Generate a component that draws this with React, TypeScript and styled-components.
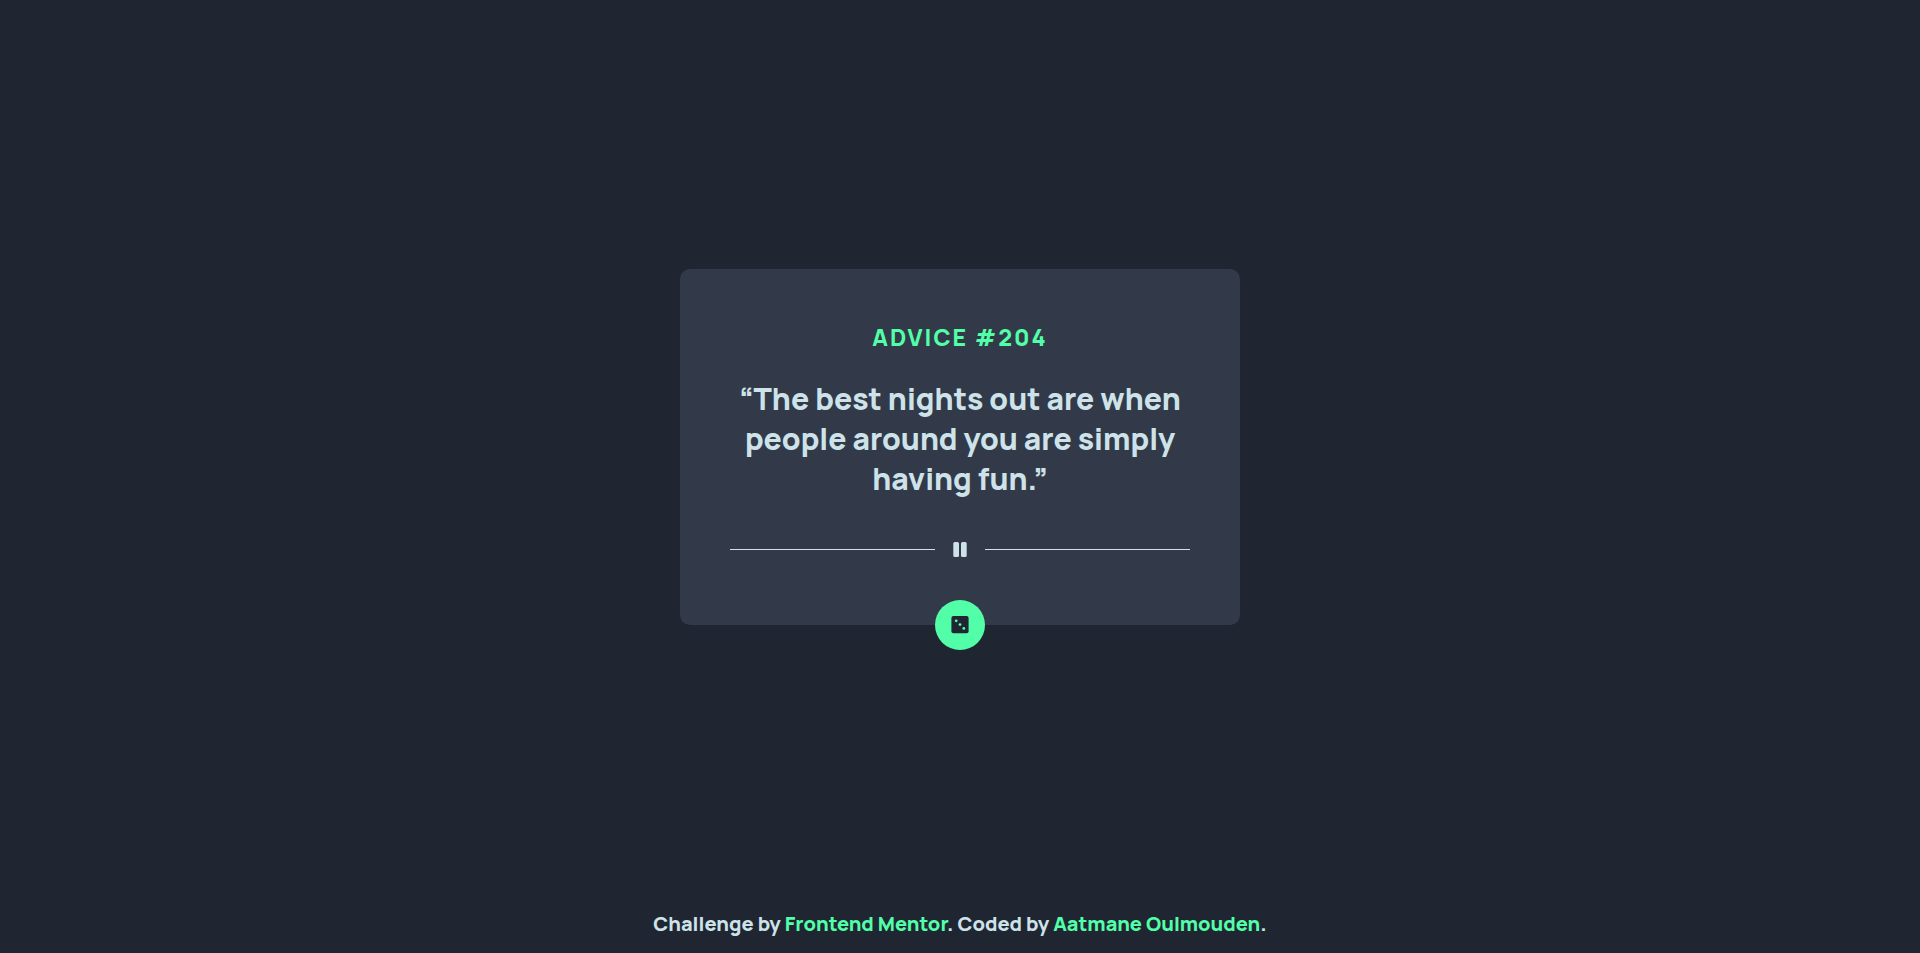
import React from "react";
import styled, { createGlobalStyle } from "styled-components";

const GlobalStyle = createGlobalStyle`
  *, *::before, *::after { box-sizing: border-box; }
  body {
    margin: 0;
    background: #1f2632;
    color: #cee3e9;
    font-family: Manrope, Inter, "Open Sans", sans-serif;
    font-weight: 800;
  }
`;

const Page = styled.div`
  display: flex;
  flex-direction: column;
  align-items: center;
  min-height: 100vh;
`;

const Main = styled.main`
  flex: 1;
  display: flex;
  align-items: center;
  justify-content: center;
  width: 100%;
  padding: 16px;
`;

const Card = styled.section`
  display: flex;
  flex-direction: column;
  align-items: center;
  width: 100%;
  max-width: 560px;
  padding: 50px 50px 0;
  border-radius: 10px;
  background: #323a49;
  text-align: center;
`;

const Title = styled.h1`
  margin: 0 0 24px;
  color: #52ffa8;
  font-size: 23px;
  font-weight: 800;
  line-height: 36px;
  letter-spacing: 2px;
`;

const Quote = styled.p`
  margin: 0;
  font-size: 30px;
  line-height: 40px;
`;

const Divider = styled.div`
  display: flex;
  align-items: center;
  width: 100%;
  height: 21px;
  margin: 40px 0;
  gap: 18px;
`;

const Line = styled.span`
  flex: 1;
  height: 1px;
  background: #cee3e9;
`;

const DiceButton = styled.button`
  display: grid;
  place-items: center;
  width: 50px;
  height: 50px;
  margin-bottom: -25px;
  padding: 0;
  border: 0;
  border-radius: 50%;
  background: #52ffa8;
  color: #1f2632;
  cursor: pointer;
`;

const Footer = styled.footer`
  padding: 16px;
  font-size: 20px;
  line-height: 27px;
  text-align: center;
`;

const Link = styled.a`
  color: #52ffa8;
  text-decoration: none;
`;

export default function App() {
  return (
    <Page>
      <GlobalStyle />
      <Main>
        <Card>
          <Title>ADVICE #204</Title>
          <Quote>“The best nights out are when people around you are simply having fun.”</Quote>
          <Divider>
            <Line />
            <svg width="14" height="15" viewBox="0 0 14 15" fill="#cee3e9" aria-hidden="true">
              <rect x="0.3" width="5.7" height="15" rx="1.6" />
              <rect x="8" width="5.7" height="15" rx="1.6" />
            </svg>
            <Line />
          </Divider>
          <DiceButton type="button" aria-label="New advice">
            <svg width="18" height="18" viewBox="0 0 18 18" aria-hidden="true">
              <rect x="0.4" y="0" width="17.2" height="17.2" rx="2" fill="currentColor" />
              <g fill="#52ffa8">
                <circle cx="5.2" cy="4.8" r="1.4" />
                <circle cx="9" cy="8.6" r="1.4" />
                <circle cx="12.8" cy="12.4" r="1.4" />
              </g>
            </svg>
          </DiceButton>
        </Card>
      </Main>
      <Footer>
        Challenge by <Link href="#frontend-mentor">Frontend Mentor</Link>. Coded by{" "}
        <Link href="#author">Aatmane Oulmouden</Link>.
      </Footer>
    </Page>
  );
}
